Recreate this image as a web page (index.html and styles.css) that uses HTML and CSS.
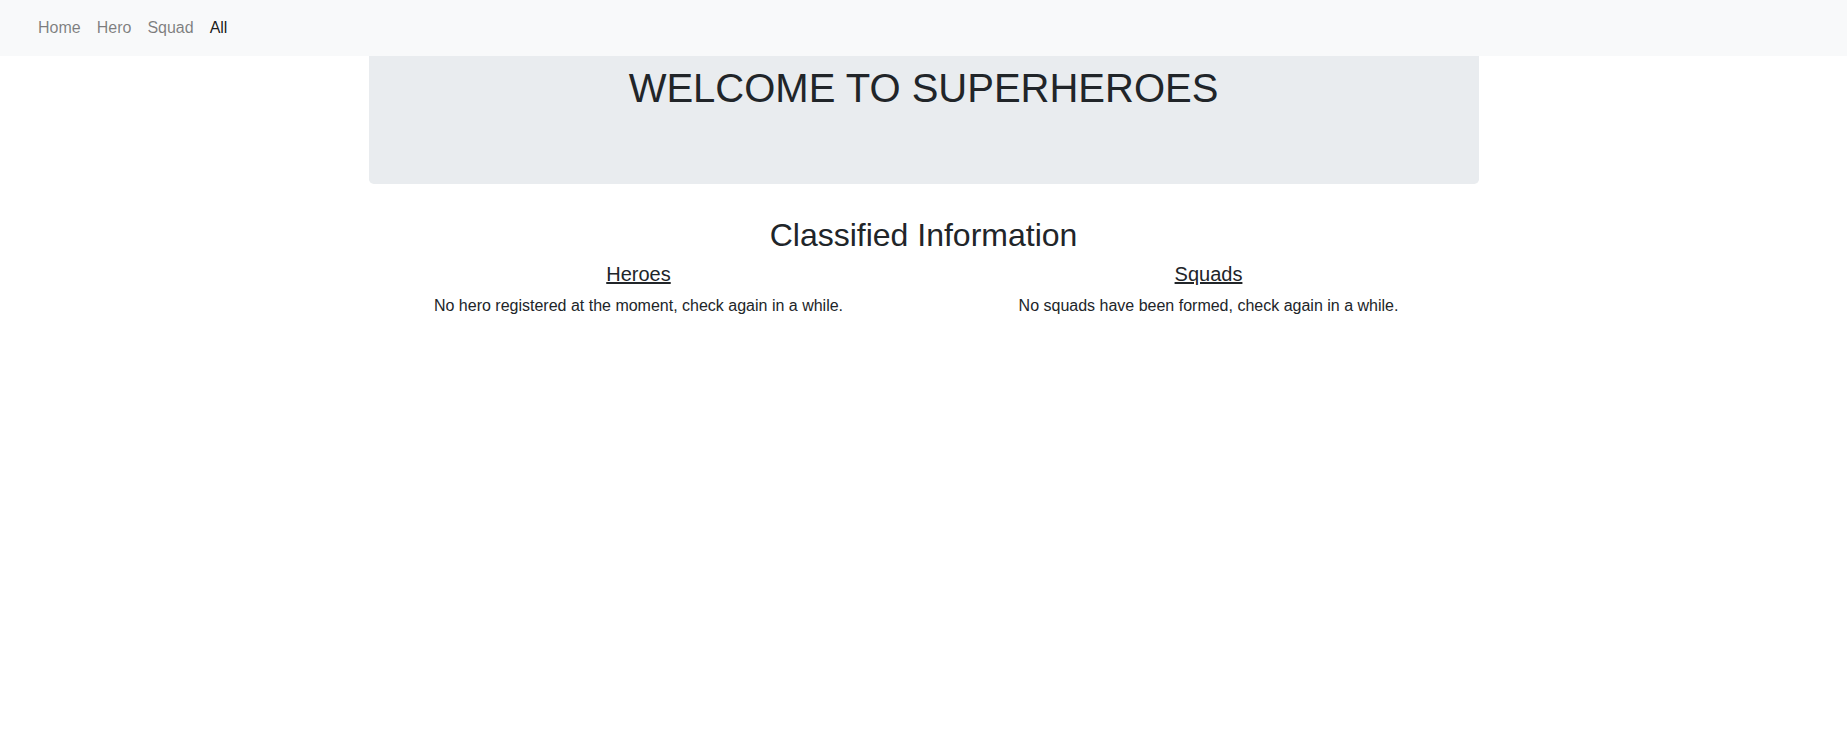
FILE: index.html
```html
<!DOCTYPE html>
<html lang="en">
<head>
<meta charset="utf-8">
<title>Superheroes</title>
<link rel="stylesheet" href="styles.css">
</head>
<body>
<nav class="navbar">
  <div class="navbar-inner">
    <ul class="nav">
      <li><a class="nav-link" href="#">Home</a></li>
      <li><a class="nav-link" href="#">Hero</a></li>
      <li><a class="nav-link" href="#">Squad</a></li>
      <li><a class="nav-link active" href="#">All</a></li>
    </ul>
  </div>
</nav>
<div class="container">
  <div class="jumbotron">
    <h1 class="title">WELCOME TO SUPERHEROES</h1>
  </div>
  <h2 class="section-title">Classified Information</h2>
  <div class="row">
    <div class="col">
      <h5 class="col-title"><a href="#">Heroes</a></h5>
      <p class="col-text">No hero registered at the moment, check again in a while.</p>
    </div>
    <div class="col">
      <h5 class="col-title"><a href="#">Squads</a></h5>
      <p class="col-text">No squads have been formed, check again in a while.</p>
    </div>
  </div>
</div>
</body>
</html>
```

FILE: styles.css
```css
* { box-sizing: border-box; }
html, body {
  margin: 0;
  padding: 0;
}
body {
  font-family: "Liberation Sans", Arial, sans-serif;
  font-size: 16px;
  line-height: 1.5;
  color: #212529;
  background: #fff;
}
.navbar {
  position: fixed;
  top: 0;
  left: 0;
  right: 0;
  z-index: 10;
  background: #f8f9fa;
  padding: 8px 16px;
}
.navbar-inner {
  padding: 0 14px;
}
.nav {
  list-style: none;
  margin: 0;
  padding: 0;
  display: flex;
}
.nav-link {
  display: block;
  padding: 8px;
  color: rgba(0, 0, 0, 0.5);
  text-decoration: none;
}
.nav-link.active {
  color: rgba(0, 0, 0, 0.9);
}
.container {
  width: 1140px;
  margin: 0 auto;
  padding: 0 15px;
}
.jumbotron {
  background: #e9ecef;
  border-radius: 0 0 4.8px 4.8px;
  padding: 64px 32px;
  margin-bottom: 32px;
  text-align: center;
}
.title {
  margin: 0 0 8px;
  font-size: 40px;
  font-weight: 400;
  line-height: 1.2;
}
.section-title {
  margin: 0 0 8px;
  font-size: 32px;
  font-weight: 400;
  line-height: 1.2;
  text-align: center;
}
.row {
  display: flex;
  margin: 0 -15px;
}
.col {
  flex: 0 0 50%;
  padding: 0 15px;
  text-align: center;
}
.col-title {
  margin: 0 0 8px;
  font-size: 20px;
  font-weight: 400;
  line-height: 1.2;
}
.col-title a {
  color: #212529;
  text-decoration: underline;
}
.col-text {
  margin: 0 0 16px;
}
```
